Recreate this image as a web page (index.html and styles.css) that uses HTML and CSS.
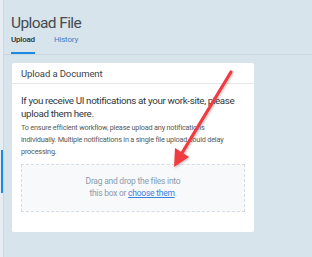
FILE: index.html
```html
<!DOCTYPE html>
<html lang="en">
<head>
    <meta charset="UTF-8" />
    <meta name="viewport" content="width=device-width, initial-scale=1.0"/>
    <title>Upload File</title>
    <link rel="stylesheet" href="styles.css">
</head>
<body>
<div class="layout">
    <aside class="side-rail">
        <div class="rail-marker"></div>
    </aside>
    <main class="page">
        <div class="page-head">
            <h1>Upload File</h1>
            <nav class="tabs">
                <a class="tab active">Upload</a>
                <a class="tab">History</a>
            </nav>
        </div>
        <section class="card">
            <div class="card-title">Upload a Document</div>
            <div class="card-body">
                <p class="lead">If you receive UI notifications at your work-site, please upload them here.</p>
                <p class="note">To ensure efficient workflow, please upload any notifications individually. Multiple notifications in a single file upload could delay processing.</p>
                <div class="dropzone">
                    Drag and drop the files into<br>
                    this box or <a class="link">choose them</a>.
                </div>
            </div>
        </section>
    </main>
</div>

<svg class="callout-arrow" width="312" height="257" viewBox="0 0 312 257">
    <defs>
        <filter id="shadow" x="-20%" y="-20%" width="140%" height="140%">
            <feDropShadow dx="1" dy="1" stdDeviation="1" flood-color="#000" flood-opacity="0.25"/>
        </filter>
    </defs>
    <g filter="url(#shadow)">
        <line x1="231" y1="72" x2="182" y2="153" stroke="#f03a3f" stroke-width="3.2" stroke-linecap="round"/>
        <polygon points="174,167 175,148 189,157" fill="#f03a3f"/>
    </g>
</svg>
</body>
</html>
```

FILE: styles.css
```css
body {
  margin: 0;
  font-family: Roboto, "Noto Sans", sans-serif;
  background-color: #d8e4ec;
  width: 312px;
  height: 257px;
  overflow: hidden;
}

.layout {
  display: flex;
  height: 257px;
}

.side-rail {
  width: 3px;
  flex-shrink: 0;
  background-color: #e6edf2;
  border-right: 1px solid #cdd9e2;
  padding-top: 150px;
}

.rail-marker {
  width: 2px;
  height: 43px;
  margin-left: 1px;
  background-color: #1e88e5;
}

.page {
  flex: 1;
}

.page-head {
  padding: 13px 0 0 7px;
  border-bottom: 1px solid #cbd7e0;
}

.page-head h1 {
  margin: 0;
  font-size: 15.5px;
  font-weight: 400;
  color: #444b52;
  letter-spacing: -0.6px;
  line-height: 20px;
}

.tabs {
  display: flex;
  gap: 19px;
}

.tab {
  font-size: 8px;
  color: #3b82c4;
  padding: 2px 0 8px;
  letter-spacing: -0.2px;
}

.tab.active {
  color: #2b2f33;
  font-weight: 500;
  border-bottom: 2px solid #1e88e5;
}

.card {
  background: white;
  margin: 8px 0 0 8px;
  width: 242px;
  height: 169px;
  border-radius: 2px;
}

.card-title {
  font-size: 9.5px;
  color: #3c4247;
  padding: 5px 9px 4px;
  line-height: 11px;
  border-bottom: 1px solid #e4e8eb;
  letter-spacing: -0.1px;
}

.card-body {
  padding: 10px 9px 0;
}

.lead {
  margin: 0 8px 0 0;
  font-size: 9.8px;
  line-height: 13px;
  color: #33383c;
  letter-spacing: -0.35px;
}

.note {
  margin: 2px 8px 0 0;
  font-size: 7.3px;
  line-height: 12px;
  color: #555b60;
  letter-spacing: -0.2px;
}

.dropzone {
  margin-top: 6px;
  height: 48px;
  border: 1px dashed #d3dde6;
  background-color: #f7f9fb;
  text-align: center;
  font-size: 8.5px;
  line-height: 12px;
  color: #8a9cae;
  padding-top: 10px;
  box-sizing: border-box;
  letter-spacing: -0.25px;
}

.link {
  color: #3b82e0;
  text-decoration: underline;
}

.callout-arrow {
  position: absolute;
  top: 0;
  left: 0;
  pointer-events: none;
}
```
